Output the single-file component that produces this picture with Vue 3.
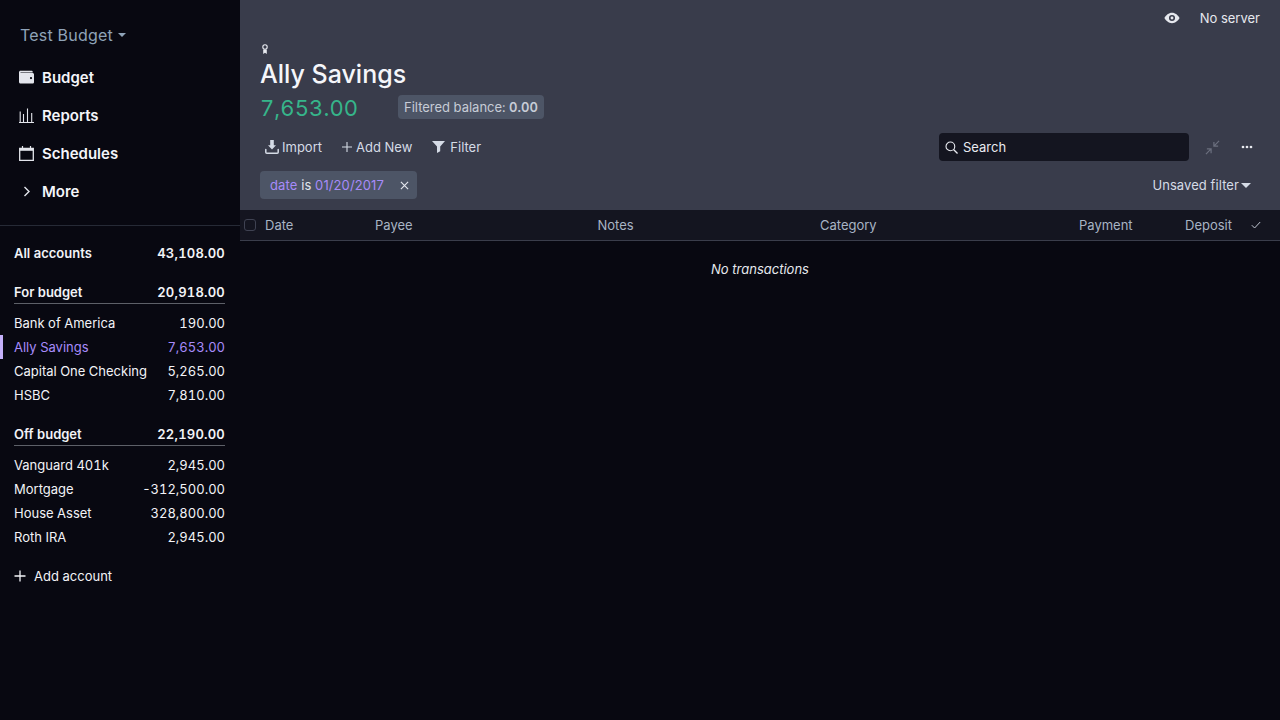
<template>
  <div class="app">
    <aside class="sidebar">
      <div class="budget-name">Test Budget <span class="caret small"></span></div>
      <nav class="nav">
        <div class="nav-item">
          <svg class="nav-icon" viewBox="0 0 15 15"><path fill="currentColor" fill-rule="evenodd" d="M1.500 .8h11c.7 0 1.200.4 1.200 1v.7H1.600c-.3 0-.3.5 0 .5H13.500c.8 0 1.500.6 1.500 1.400v7.800c0 .8-.7 1.300-1.500 1.300h-12C.7 13.500 0 12.800 0 12V2.300C0 1.500.7.800 1.500.800zM12 7a1.100 1.100 0 1 0 0 2.200A1.100 1.100 0 0 0 12 7z"/></svg>
          Budget
        </div>
        <div class="nav-item">
          <svg class="nav-icon" viewBox="0 0 15 15"><path fill="none" stroke="currentColor" stroke-width="1.100" d="M0 14.500h15M1.200 3.500v11M4.500 6v8.500M8.500 .5v14M12.700 5v9.500"/></svg>
          Reports
        </div>
        <div class="nav-item">
          <svg class="nav-icon" viewBox="0 0 15 15"><path fill="none" stroke="currentColor" stroke-width="1.300" d="M.7 2.500h13.600v11.800H.7z"/><path fill="currentColor" d="M.5 2.500h14v2.300H.5z"/><path fill="none" stroke="currentColor" stroke-width="1.200" d="M3.500 0v3M11.500 0v3"/></svg>
          Schedules
        </div>
        <div class="nav-item">
          <svg class="nav-icon chevron" viewBox="0 0 15 15"><path fill="none" stroke="currentColor" stroke-width="1.400" d="M5.500 3 10 7.500 5.500 12"/></svg>
          More
        </div>
      </nav>

      <div class="accounts">
        <div class="account-row total">
          <span>All accounts</span><span class="sum">43,108.00</span>
        </div>
        <template v-for="group in groups" :key="group.name">
          <div class="account-row group-head">
            <span>{{ group.name }}</span><span class="sum">{{ group.total }}</span>
          </div>
          <div class="group-list">
            <div
              v-for="acc in group.accounts"
              :key="acc.name"
              class="account-row"
              :class="{ selected: acc.name === 'Ally Savings' }"
            >
              <span>{{ acc.name }}</span><span>{{ acc.balance }}</span>
            </div>
          </div>
        </template>
        <div class="add-account">
          <svg class="plus" viewBox="0 0 12 12"><path fill="none" stroke="currentColor" stroke-width="1.300" d="M6 .5v11M.5 6h11"/></svg>
          Add account
        </div>
      </div>
    </aside>

    <main class="main">
      <header class="header">
        <div class="topbar">
          <svg class="eye" viewBox="0 0 20 20"><path fill="currentColor" fill-rule="evenodd" d="M10 3.500c4.200 0 7.600 3.200 9.500 6.500-1.900 3.300-5.300 6.500-9.500 6.500S2.400 13.300.5 10C2.400 6.700 5.800 3.500 10 3.500zm0 2.700a3.800 3.800 0 1 0 0 7.600 3.800 3.800 0 0 0 0-7.600zm0 2a1.800 1.800 0 1 1 0 3.600 1.800 1.800 0 0 1 0-3.600z"/></svg>
          <span>No server</span>
        </div>
        <svg class="badge-icon" viewBox="0 0 8 10"><circle cx="4" cy="3" r="2.200" fill="none" stroke="currentColor" stroke-width="1.100"/><path fill="currentColor" d="M2.200 5.500h3.600V10L4 8.800 2.200 10z"/></svg>
        <h1 class="title">Ally Savings</h1>
        <div class="balance-row">
          <span class="balance">7,653.00</span>
          <span class="filtered">Filtered balance: <b>0.00</b></span>
        </div>
        <div class="toolbar">
          <button class="tool import">
            <svg viewBox="0 0 14 14"><path fill="currentColor" d="M5.200 0h3.600v5.200H11L7 9.400 3 5.200h2.200z"/><path fill="none" stroke="currentColor" stroke-width="1.500" stroke-linecap="round" d="M.8 9.500v2.700c0 .6.400 1 1 1h10.400c.6 0 1-.4 1-1V9.500"/></svg>
            Import
          </button>
          <button class="tool add">
            <svg viewBox="0 0 10 10"><path fill="none" stroke="currentColor" stroke-width="1.100" d="M5 0v10M0 5h10"/></svg>
            Add New
          </button>
          <button class="tool filter">
            <svg viewBox="0 0 13 12"><path fill="currentColor" d="M0 0h13L8.200 5.600v4.600L5 12V5.600z"/></svg>
            Filter
          </button>
          <div class="search">
            <svg viewBox="0 0 14 14"><circle cx="5.800" cy="5.800" r="4.700" fill="none" stroke="currentColor" stroke-width="1.200"/><path stroke="currentColor" stroke-width="1.400" d="m9.200 9.200 4.300 4.300"/></svg>
            Search
          </div>
          <svg class="collapse" viewBox="0 0 16 16"><path fill="none" stroke="currentColor" stroke-width="1.300" d="M15 1 9.800 6.200M9.500 2v4.500H14M1 15l5.200-5.200M6.500 14V9.500H2"/></svg>
          <svg class="dots" viewBox="0 0 12 4"><circle cx="2" cy="2" r="1.350" fill="currentColor"/><circle cx="6" cy="2" r="1.350" fill="currentColor"/><circle cx="10" cy="2" r="1.350" fill="currentColor"/></svg>
        </div>
        <div class="filter-row">
          <div class="chip">
            <span><i>date</i> is <i>01/20/2017</i></span>
            <svg viewBox="0 0 10 10"><path fill="none" stroke="currentColor" stroke-width="1.300" d="m1 1 8 8M9 1 1 9"/></svg>
          </div>
          <div class="saved">Unsaved filter <span class="caret"></span></div>
        </div>
      </header>

      <div class="table-head">
        <span class="checkbox"></span>
        <span class="col date">Date</span>
        <span class="col payee">Payee</span>
        <span class="col notes">Notes</span>
        <span class="col category">Category</span>
        <span class="col payment">Payment</span>
        <span class="col deposit">Deposit</span>
        <svg class="check" viewBox="0 0 10 8"><path fill="none" stroke="currentColor" stroke-width="1" d="m.8 4.200 2.800 2.800L9.200 1"/></svg>
      </div>
      <div class="empty">No transactions</div>
    </main>
  </div>
</template>

<script setup>
const groups = [
  {
    name: "For budget",
    total: "20,918.00",
    accounts: [
      { name: "Bank of America", balance: "190.00" },
      { name: "Ally Savings", balance: "7,653.00" },
      { name: "Capital One Checking", balance: "5,265.00" },
      { name: "HSBC", balance: "7,810.00" },
    ],
  },
  {
    name: "Off budget",
    total: "22,190.00",
    accounts: [
      { name: "Vanguard 401k", balance: "2,945.00" },
      { name: "Mortgage", balance: "-312,500.00" },
      { name: "House Asset", balance: "328,800.00" },
      { name: "Roth IRA", balance: "2,945.00" },
    ],
  },
];
</script>

<style>
body {
  background: #080811;
}
</style>

<style scoped>
.app {
  display: flex;
  width: 1280px;
  height: 720px;
  overflow: hidden;
  background: #080811;
  color: #f2f3f7;
  font-family: Inter, "Noto Sans", sans-serif;
  font-size: 13px;
}

/* sidebar */
.sidebar {
  width: 240px;
  flex-shrink: 0;
  background: #080811;
}

.budget-name {
  display: flex;
  align-items: center;
  gap: 5px;
  height: 20px;
  padding: 25px 0 0 20px;
  font-size: 16px;
  letter-spacing: 0.2px;
  color: #8fa3b8;
}

.nav {
  padding-top: 13px;
  padding-bottom: 15px;
  border-bottom: 1px solid #262a36;
}

.nav-item {
  display: flex;
  align-items: center;
  gap: 8px;
  height: 38px;
  padding-left: 19px;
  font-size: 15px;
  font-weight: 600;
  color: #f4f5fa;
}

.nav-icon {
  width: 15px;
  height: 15px;
  color: #e3e5ec;
}

.accounts {
  padding-top: 15px;
}

.account-row {
  display: flex;
  justify-content: space-between;
  align-items: center;
  height: 24px;
  margin-right: 15px;
  padding-left: 14px;
  white-space: nowrap;
  font-variant-numeric: tabular-nums;
}

.sum {
  letter-spacing: 0.22px;
}

.total {
  font-weight: 600;
}

.group-head {
  height: 22px;
  margin-top: 16px;
  margin-left: 14px;
  padding-left: 0;
  border-bottom: 1px solid #5d6068;
  font-weight: 600;
}

.group-list {
  padding-top: 7px;
}

.selected {
  color: #a78bfa;
  margin-right: 0;
  padding-right: 15px;
  padding-left: 11px;
  border-left: 3px solid #c4b0fa;
}

.add-account {
  display: flex;
  align-items: center;
  gap: 8px;
  margin-top: 15px;
  height: 24px;
  padding-left: 14px;
}

.plus {
  width: 12px;
  height: 12px;
}

/* header */
.main {
  flex: 1;
  min-width: 0;
  display: flex;
  flex-direction: column;
}

.header {
  height: 210px;
  box-sizing: border-box;
  background: #393c4b;
}

.topbar {
  display: flex;
  justify-content: flex-end;
  align-items: center;
  gap: 20px;
  height: 36px;
  padding-right: 20px;
  color: #e6e8ee;
}

.eye {
  width: 16px;
  height: 16px;
}

.badge-icon {
  display: block;
  width: 8px;
  height: 10px;
  margin: 8px 0 0 21px;
  color: #e9ebf1;
}

.title {
  margin: 2px 0 0 20px;
  height: 36px;
  font-size: 25px;
  line-height: 36px;
  font-weight: 500;
  color: #f5f6fa;
}

.balance-row {
  display: flex;
  align-items: flex-start;
  height: 26px;
  margin: 3px 0 0 20px;
}

.balance {
  width: 138px;
  font-size: 22px;
  line-height: 26px;
  font-variant-numeric: tabular-nums;
  letter-spacing: 0.1px;
  color: #36b58a;
}

.filtered {
  padding: 0 6px;
  line-height: 24px;
  border-radius: 4px;
  background: #4d5566;
  color: #c7ccd6;
  font-variant-numeric: tabular-nums;
}

.filtered b {
  font-weight: 600;
}

.toolbar {
  display: flex;
  align-items: center;
  height: 28px;
  margin-top: 12px;
  padding: 0 27px 0 25px;
}

.tool {
  display: flex;
  align-items: center;
  gap: 3px;
  padding: 0;
  border: 0;
  background: none;
  color: #d5dbe6;
  font: inherit;
}

.tool.import svg {
  width: 14px;
  height: 14px;
}

.tool.add {
  margin-left: 20px;
  gap: 4px;
}

.tool.add svg {
  width: 10px;
  height: 10px;
}

.tool.filter {
  margin-left: 20px;
  gap: 5px;
}

.tool.filter svg {
  width: 13px;
  height: 12px;
}

.search {
  display: flex;
  align-items: center;
  gap: 5px;
  width: 250px;
  height: 28px;
  box-sizing: border-box;
  margin-left: auto;
  padding-left: 6px;
  border-radius: 4px;
  background: #141520;
  color: #e8eaf0;
}

.search svg {
  width: 13px;
  height: 13px;
}

.collapse {
  width: 15px;
  height: 15px;
  margin-left: 16px;
  color: #6b6f7e;
}

.dots {
  width: 12px;
  height: 4px;
  margin-left: 21px;
  color: #e8eaf0;
}

.filter-row {
  display: flex;
  align-items: center;
  justify-content: space-between;
  height: 28px;
  margin-top: 10px;
  padding: 0 29px 0 20px;
}

.chip {
  display: flex;
  align-items: center;
  gap: 16px;
  height: 28px;
  padding: 0 8px 0 10px;
  border-radius: 4px;
  background: #4d5566;
  color: #e3e6ed;
  letter-spacing: 0.1px;
}

.chip i {
  font-style: normal;
  color: #a78bfa;
}

.chip svg {
  width: 9px;
  height: 9px;
}

.saved {
  display: flex;
  align-items: center;
  gap: 2px;
  letter-spacing: 0.08px;
  color: #d5dbe6;
}

.caret {
  display: inline-block;
  width: 0;
  height: 0;
  border-left: 5px solid transparent;
  border-right: 5px solid transparent;
  border-top: 5px solid currentColor;
}

.caret.small {
  border-left-width: 4px;
  border-right-width: 4px;
  border-top-width: 4px;
}

/* table */
.table-head {
  display: flex;
  align-items: center;
  height: 31px;
  box-sizing: border-box;
  background: #141520;
  border-bottom: 1px solid #3a3d4b;
  color: #a8b4c4;
}

.checkbox {
  width: 10px;
  height: 10px;
  margin-left: 4px;
  border: 1px solid #3f4252;
  border-radius: 3px;
}

.col.date {
  margin-left: 9px;
  width: 110px;
}

.col.payee {
  width: 222.500px;
}

.col.notes {
  width: 222.500px;
}

.col.category {
  width: 259px;
}

.col.payment {
  width: 106px;
}

.check {
  width: 10px;
  height: 8px;
  margin-left: 19px;
  color: #c1c7d2;
}

.empty {
  margin-top: 20px;
  text-align: center;
  font-style: italic;
  color: #e6e8ee;
}
</style>
